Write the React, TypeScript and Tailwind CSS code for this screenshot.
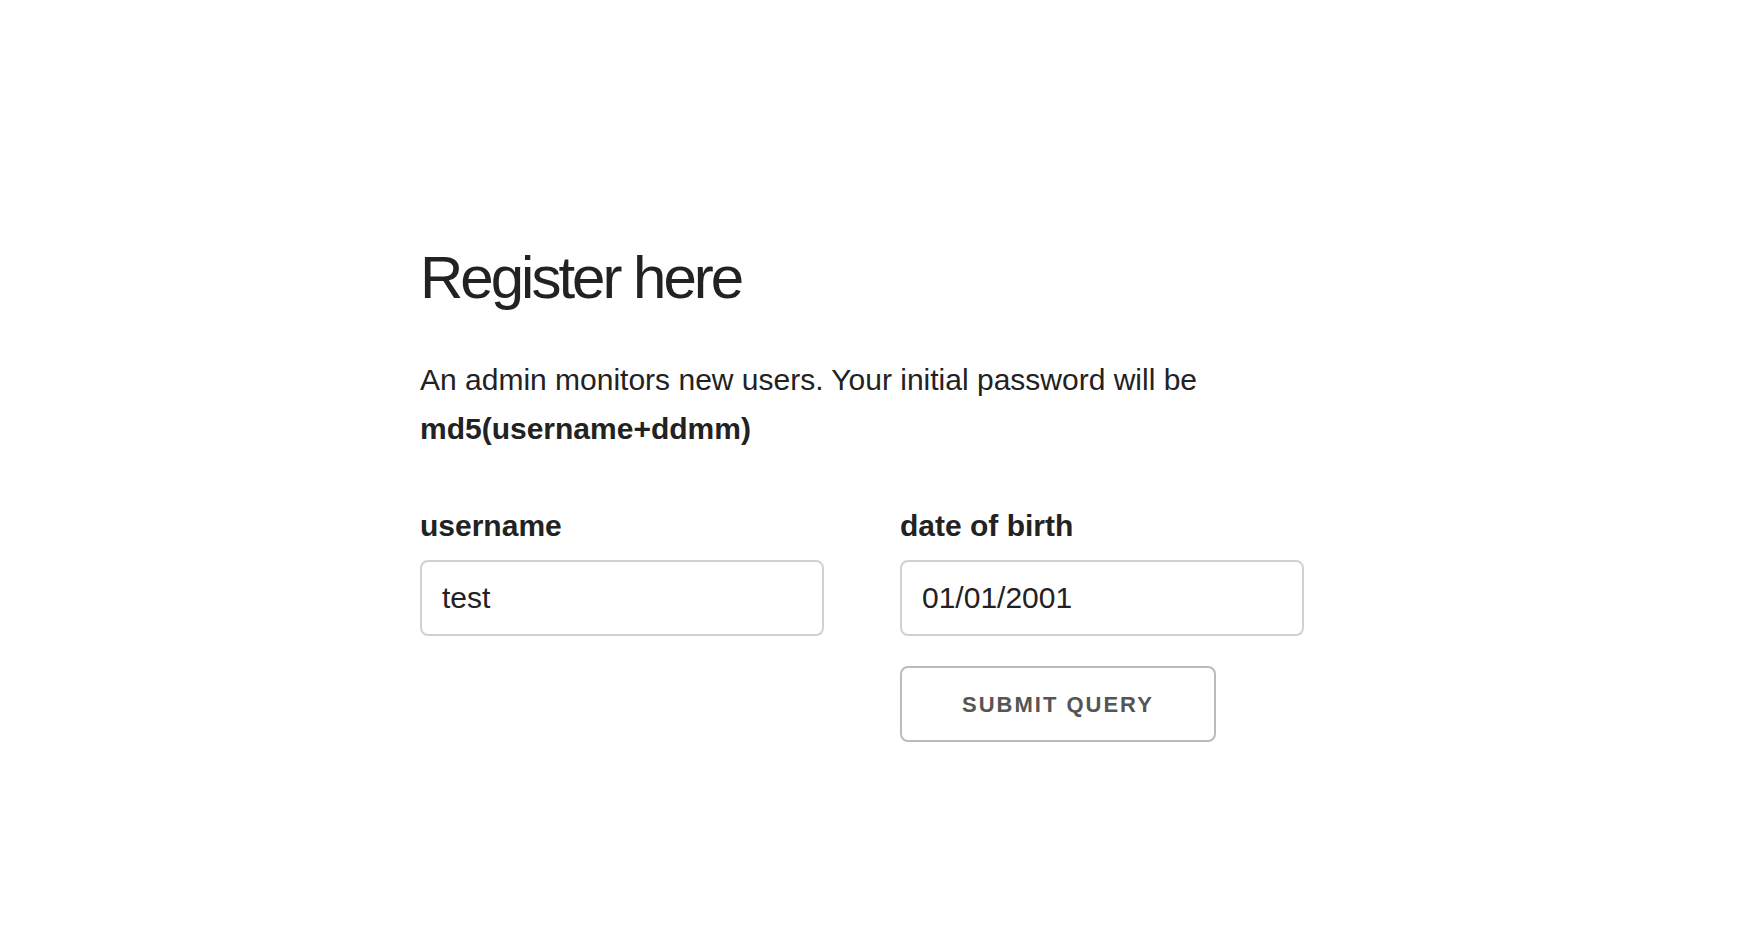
export default function App() {
  return (
    <div className="min-h-[930px] bg-white text-[#222] font-['Liberation_Sans',Arial,sans-serif]">
      <div className="pl-[420px] pt-[237px]">
        <h4 className="m-0 text-[60px] leading-[81px] font-light tracking-[-3px] mb-[37px]">
          Register here
        </h4>
        <p className="m-0 w-[840px] text-[30px] leading-[49px] mb-[49px]">
          An admin monitors new users. Your initial password will be{' '}
          <b className="font-bold">md5(username+ddmm)</b>
        </p>
        <form className="flex gap-[76px]" onSubmit={(e) => e.preventDefault()}>
          <div className="flex w-[404px] flex-col">
            <label className="mb-[10px] text-[30px] leading-[48px] font-bold">
              username
            </label>
            <input
              className="h-[76px] w-full rounded-[8px] border-2 border-[#d1d1d1] bg-white px-[20px] text-[30px] text-[#222] outline-none"
              defaultValue="test"
              type="text"
            />
          </div>
          <div className="flex w-[404px] flex-col items-start">
            <label className="mb-[10px] text-[30px] leading-[48px] font-bold">
              date of birth
            </label>
            <input
              className="h-[76px] w-full rounded-[8px] border-2 border-[#d1d1d1] bg-white px-[20px] text-[30px] text-[#222] outline-none"
              defaultValue="01/01/2001"
              type="text"
            />
            <button
              className="mt-[30px] h-[76px] rounded-[8px] border-2 border-[#bbb] bg-transparent px-[60px] text-[22px] font-bold uppercase tracking-[2px] text-[#555]"
              type="submit"
            >
              Submit Query
            </button>
          </div>
        </form>
      </div>
    </div>
  );
}
